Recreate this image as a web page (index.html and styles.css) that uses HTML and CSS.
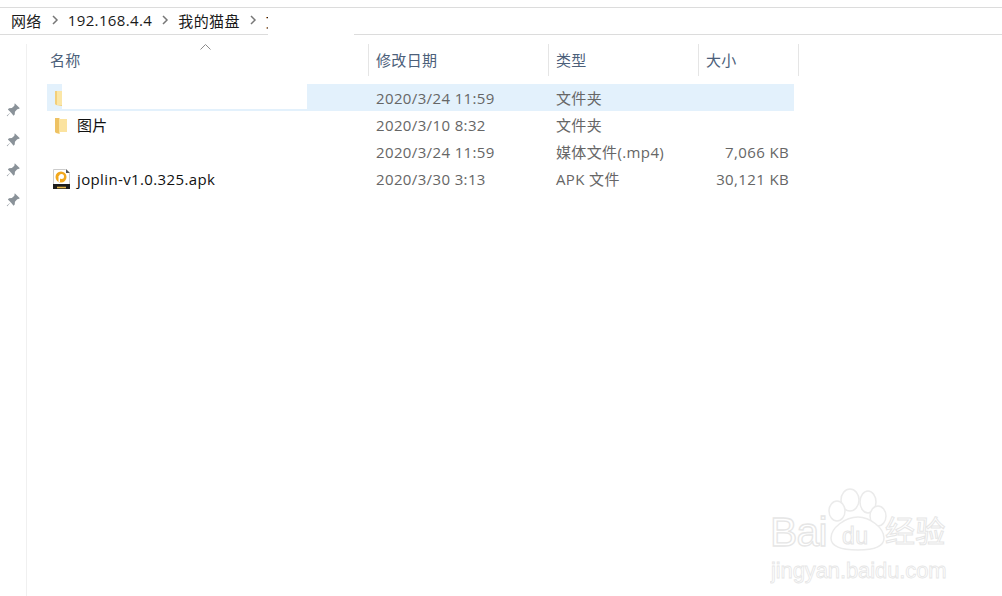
FILE: index.html
```html
<!DOCTYPE html>
<html lang="zh-CN">
<head>
<meta charset="utf-8">
<title>我的猫盘</title>
<link rel="stylesheet" href="styles.css">
</head>
<body>

<div class="pathBar">
	<span class="crumb">网络</span>
	<svg class="chev" width="8" height="10" viewBox="0 0 8 10"><path d="M2 1l4 4-4 4" fill="none" stroke="#777" stroke-width="1.500"/></svg>
	<span class="crumb">192.168.4.4</span>
	<svg class="chev" width="8" height="10" viewBox="0 0 8 10"><path d="M2 1l4 4-4 4" fill="none" stroke="#777" stroke-width="1.500"/></svg>
	<span class="crumb">我的猫盘</span>
	<svg class="chev" width="8" height="10" viewBox="0 0 8 10"><path d="M2 1l4 4-4 4" fill="none" stroke="#777" stroke-width="1.500"/></svg>
	<span class="crumb">文</span>
</div>
<div class="pathPatch"></div>

<div class="main">
	<div class="side">
		<svg class="pin" width="16" height="16" viewBox="0 0 14 14"><path d="M8.500 1l4.500 4.500-1.300.700-1 .100-2 2.200-.200 2.500-1 1L5 9 2 12.500 1.500 12 5 9 2.500 6.500l1-1 2.500-.200 2.200-2 .100-1z" fill="#8a9299"/></svg>
		<svg class="pin" width="16" height="16" viewBox="0 0 14 14"><path d="M8.500 1l4.500 4.500-1.300.700-1 .100-2 2.200-.200 2.500-1 1L5 9 2 12.500 1.500 12 5 9 2.500 6.500l1-1 2.500-.200 2.200-2 .100-1z" fill="#8a9299"/></svg>
		<svg class="pin" width="16" height="16" viewBox="0 0 14 14"><path d="M8.500 1l4.500 4.500-1.300.700-1 .100-2 2.200-.200 2.500-1 1L5 9 2 12.500 1.500 12 5 9 2.500 6.500l1-1 2.500-.200 2.200-2 .100-1z" fill="#8a9299"/></svg>
		<svg class="pin" width="16" height="16" viewBox="0 0 14 14"><path d="M8.500 1l4.500 4.500-1.300.700-1 .100-2 2.200-.200 2.500-1 1L5 9 2 12.500 1.500 12 5 9 2.500 6.500l1-1 2.500-.200 2.200-2 .100-1z" fill="#8a9299"/></svg>
	</div>

	<div class="list">
		<div class="head">
			<div class="col colName">名称
				<svg class="sortArrow" width="11" height="6" viewBox="0 0 11 6"><path d="M.5 5.500l5-5 5 5" fill="none" stroke="#8c8c8c"/></svg>
			</div>
			<div class="col">修改日期</div>
			<div class="col">类型</div>
			<div class="col colLast">大小</div>
		</div>

		<div class="row is-selected">
			<div class="name">
				<svg class="icon" width="17" height="20" viewBox="0 0 17 20"><path d="M2 3h7v15l-6-1-1-1z" fill="#f3cf7a"/><path d="M4 3h11v14H4z" fill="#fbe6a6"/></svg>
				<span class="nameBlank"></span>
			</div>
			<div class="date">2020/3/24 11:59</div>
			<div class="type">文件夹</div>
			<div class="size"></div>
		</div>
		<div class="row">
			<div class="name">
				<svg class="icon" width="17" height="20" viewBox="0 0 17 20"><path d="M2 3h4l1 1v15l-4-1-1-1z" fill="#eec263"/><path d="M6 4h8v13H7v2H6z" fill="#fbe3a0"/></svg>
				<span class="label">图片</span>
			</div>
			<div class="date">2020/3/10 8:32</div>
			<div class="type">文件夹</div>
			<div class="size"></div>
		</div>
		<div class="row">
			<div class="name"></div>
			<div class="date">2020/3/24 11:59</div>
			<div class="type">媒体文件(.mp4)</div>
			<div class="size">7,066 KB</div>
		</div>
		<div class="row">
			<div class="name">
				<svg class="icon" width="17" height="20" viewBox="0 0 17 20">
					<path d="M.500.500h12l4 4v11H.500z" fill="#fff" stroke="#ccc"/>
					<path d="M13 0l4 4h-4z" fill="#555"/>
					<circle cx="8" cy="8" r="5.500" fill="#f2a81d"/>
					<circle cx="8.500" cy="7.500" r="2.500" fill="#fff"/>
					<path d="M5.500 7h1.500v6H5.500z" fill="#fff"/>
					<path d="M0 15h17v5H0z" fill="#1c1c1c"/>
					<path d="M4 18.500h9" stroke="#e5b64a" stroke-width="1.600"/>
				</svg>
				<span class="label">joplin-v1.0.325.apk</span>
			</div>
			<div class="date">2020/3/30 3:13</div>
			<div class="type">APK 文件</div>
			<div class="size">30,121 KB</div>
		</div>
	</div>
</div>

<svg class="watermark" width="190" height="100" viewBox="0 0 190 100">
	<g fill="#fff" stroke="#ebebeb" stroke-width="1.500">
		<ellipse cx="80" cy="14" rx="9" ry="11"/>
		<ellipse cx="98" cy="16" rx="8" ry="11"/>
		<ellipse cx="67" cy="25" rx="8" ry="10"/>
		<ellipse cx="108" cy="30" rx="8" ry="10"/>
		<path d="M88 31c12 0 26 11 26 21 0 9-10 12-26 12s-27-3-27-12c0-10 14-21 27-21z"/>
	</g>
	<g fill="#fff" stroke="#e6e6e6" font-family="'Liberation Sans', sans-serif">
		<text x="0" y="60" font-size="41" stroke-width="1.300" textLength="58">Bai</text>
		<text x="72" y="58" font-size="23" stroke-width="1">du</text>
		<text x="1" y="92" font-size="22" stroke-width="0.800" textLength="176">jingyan.baidu.com</text>
	</g>
	<text x="115" y="56" font-size="30" fill="#fff" stroke="#e6e6e6" stroke-width="1" font-family="'Noto Sans CJK SC', sans-serif">经验</text>
</svg>

</body>
</html>
```

FILE: styles.css
```css
* {
	margin: 0;
	padding: 0;
	box-sizing: border-box;
}
body {
	position: relative;
	height: 596px;
	overflow: hidden;
	background: #fff;
	font-family: "Open Sans", "Noto Sans CJK SC", sans-serif;
	font-size: 15px;
	letter-spacing: .37px;
}

/* address bar */
.pathBar {
	display: flex;
	align-items: center;
	height: 28px;
	margin-top: 7px;
	padding: 0 0 2px 11px;
	border-top: 1px solid #dcdcdc;
	border-bottom: 1px solid #dcdcdc;
	color: #1a1a1a;
}
.chev {
	margin: 0 9px 0 9px;
}
.pathPatch {
	position: absolute;
	left: 268px;
	top: 9px;
	width: 86px;
	height: 27px;
	background: #fff;
}

/* nav pane + file list */
.main {
	display: flex;
	height: 561px;
}
.side {
	display: flex;
	flex-direction: column;
	align-items: center;
	gap: 14px;
	width: 27px;
	margin-top: 9px;
	padding-top: 58px;
	border-right: 1px solid #f0f0f0;
}
.list {
	padding: 9px 0 0 20px;
}
.head {
	display: grid;
	grid-template-columns: 321px 180px 150px 101px;
	height: 32px;
	color: #4c607a;
}
.col {
	padding-left: 7px;
	line-height: 32px;
	border-left: 1px solid #e5e5e5;
}
.colName {
	position: relative;
	padding-left: 3px;
	border-left: 0;
}
.colLast {
	border-right: 1px solid #e5e5e5;
}
.sortArrow {
	position: absolute;
	left: 153px;
	top: 0;
}

.row {
	display: grid;
	grid-template-columns: 321px 180px 150px 96px;
	align-items: center;
	width: 747px;
	height: 27px;
	color: #666;
}
.head + .row {
	margin-top: 8px;
}
.row.is-selected {
	background: #e3f1fc;
}
.name {
	display: flex;
	align-items: center;
	height: 100%;
	padding-left: 6px;
	color: #111;
}
.icon {
	flex: none;
}
.label {
	margin-left: 7px;
}
.nameBlank {
	align-self: flex-start;
	width: 245px;
	height: 25px;
	margin-left: -8px;
	background: #fff;
}
.date {
	padding-left: 8px;
}
.type {
	padding-left: 8px;
}
.size {
	padding-right: 5px;
	text-align: right;
}

.watermark {
	position: absolute;
	left: 770px;
	top: 486px;
}
```
